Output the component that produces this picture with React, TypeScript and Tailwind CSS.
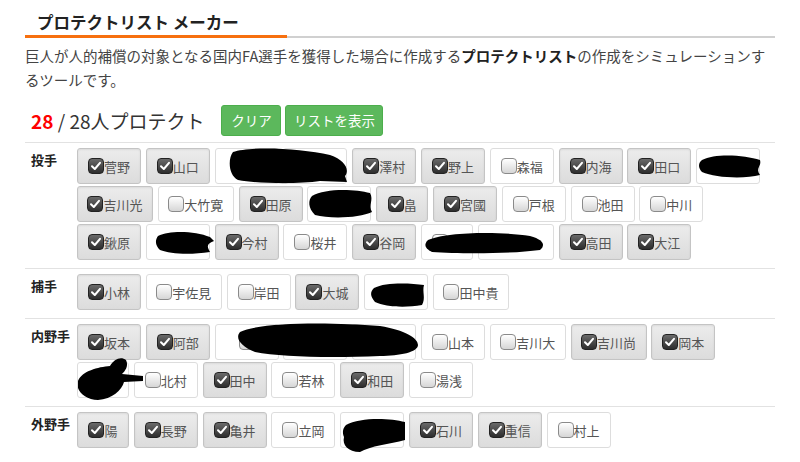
import React from "react";

type P = { n: string; c: boolean };

const W: Record<number, string> = { 1: "w-[52px]", 2: "w-[64px]", 3: "w-[76px]" };

function Check({ on }: { on: boolean }) {
  if (on)
    return (
      <span className="w-[16px] h-[16px] rounded-[4px] border border-[#222] bg-gradient-to-b from-[#6a6a6a] to-[#2e2e2e] flex items-center justify-center shrink-0">
        <svg width="12" height="12" viewBox="0 0 12 12">
          <path d="M2 6.2 L4.8 9 L10 2.8" fill="none" stroke="#fff" strokeWidth="2" strokeLinecap="round" strokeLinejoin="round" />
        </svg>
      </span>
    );
  return (
    <span className="w-[16px] h-[16px] rounded-[4px] border border-[#8a8a8a] bg-gradient-to-b from-white to-[#d6d6d6] shrink-0" />
  );
}

function Box({ p }: { p: P }) {
  const len = p.n.length || 2;
  return (
    <div
      className={
        "h-[36px] flex items-center justify-center rounded-[3px] border text-[13px] text-[#555] " +
        W[len] +
        (p.c
          ? " border-[#c4c4c4] bg-gradient-to-b from-[#ececec] to-[#dcdcdc] shadow-[inset_0_1px_2px_rgba(0,0,0,0.08)]"
          : " border-[#ddd] bg-white")
      }
    >
      <Check on={p.c} />
      <span className="leading-none">{p.n}</span>
    </div>
  );
}

const x = (n: string): P => ({ n, c: true });
const o = (n: string): P => ({ n, c: false });
const blank2: P = { n: "", c: false };
const blank1: P = { n: "\u3000", c: false };
const blank3: P = { n: "\u3000\u3000\u3000", c: false };

const rows: { label: string; items: P[] }[] = [
  {
    label: "投手",
    items: [
      x("菅野"), x("山口"), blank2, blank2, x("澤村"), x("野上"), o("森福"), x("内海"), x("田口"), blank2,
      x("吉川光"), o("大竹寛"), x("田原"), blank2, x("畠"), x("宮國"), o("戸根"), o("池田"), o("中川"),
      x("鍬原"), blank2, x("今村"), o("桜井"), x("谷岡"), blank1, blank3, x("高田"), x("大江"),
    ],
  },
  {
    label: "捕手",
    items: [x("小林"), o("宇佐見"), o("岸田"), x("大城"), blank2, o("田中貴")],
  },
  {
    label: "内野手",
    items: [
      x("坂本"), x("阿部"), blank2, blank2, blank2, o("山本"), o("吉川大"), x("吉川尚"), x("岡本"),
      blank1, o("北村"), x("田中"), o("若林"), x("和田"), o("湯浅"),
    ],
  },
  {
    label: "外野手",
    items: [x("陽"), x("長野"), x("亀井"), o("立岡"), blank2, x("石川"), x("重信"), o("村上")],
  },
];

export default function App() {
  return (
    <div
      className="relative w-[800px] h-[462px] overflow-hidden bg-white text-[#333]"
      style={{ fontFamily: '"Noto Sans CJK JP", "Noto Sans", sans-serif' }}
    >
      <div className="px-[25px]">
        <div className="pl-[12px] pt-[12px] pb-[3px] text-[16.5px] leading-[20px] font-bold text-[#222]">
          プロテクトリスト メーカー
        </div>
        <div className="flex items-end">
          <div className="w-[262px] h-[3px] bg-[#f7700f]" />
          <div className="flex-1 h-[2px] bg-[#d0d0d0]" />
        </div>
        <div className="mt-[6px] text-[14.5px] leading-[24px] text-[#444]">
          <div className="whitespace-nowrap">
            巨人が人的補償の対象となる国内FA選手を獲得した場合に作成する
            <b className="text-[#222]">プロテクトリスト</b>
            の作成をシミュレーションす
          </div>
          <div className="whitespace-nowrap">るツールです。</div>
        </div>
        <div className="mt-[13px] h-[31px] flex items-center pl-[6px]">
          <span className="text-[19px] leading-none text-[#333]">
            <b className="text-[#f00]">28</b> / 28人プロテクト
          </span>
          <div className="ml-[17px] flex gap-[4px]">
            <div className="w-[60px] h-[31px] rounded-[3px] bg-[#5cb85c] border border-[#4cae4c] text-white text-[13.5px] flex items-center justify-center">
              クリア
            </div>
            <div className="w-[98px] h-[31px] rounded-[3px] bg-[#5cb85c] border border-[#4cae4c] text-white text-[13.5px] flex items-center justify-center">
              リストを表示
            </div>
          </div>
        </div>
        <div className="mt-[6px] border-t border-[#e2e2e2]">
          {rows.map((r, i) => (
            <div key={r.label} className={"flex " + (i < rows.length - 1 ? "border-b border-[#e2e2e2]" : "")}>
              <div className="w-[52px] shrink-0 pl-[6px] pt-[8px] text-[13px] font-bold text-[#222] leading-[18px]">
                {r.label}
              </div>
              <div className="flex-1 flex flex-wrap gap-x-[4.8px] gap-y-[2px] pt-[5px] pb-[8px] pr-[10px]">
                {r.items.map((p, j) => (
                  <Box key={j} p={p} />
                ))}
              </div>
            </div>
          ))}
        </div>
      </div>
      <svg className="absolute left-0 top-0 pointer-events-none" width="800" height="462" viewBox="0 0 800 462">
        <g fill="#000">
          <path d="M233,152 C250,146 300,148 330,155 C345,160 350,170 345,176 L347,182 L320,181 C300,184 260,184 238,180 C228,175 228,158 233,152 Z" />
          <path d="M702,160 C715,153 745,155 760,160 C762,166 755,168 760,175 C745,179 715,178 702,172 C698,168 698,163 702,160 Z" />
          <path d="M312,196 C325,188 355,189 370,193 C374,200 368,205 372,212 C360,218 330,219 315,215 C308,208 308,200 312,196 Z" />
          <path d="M158,236 C170,230 195,231 210,237 L214,241 C205,244 208,248 210,252 C190,255 170,254 160,250 C155,245 155,240 158,236 Z" />
          <path d="M428,240 C445,232 500,231 530,236 C545,240 545,246 540,250 C510,254 460,254 432,252 C424,248 424,244 428,240 Z" />
          <path d="M374,288 C385,282 410,283 424,285 C422,292 426,298 422,305 C405,308 385,307 375,302 C370,296 370,292 374,288 Z" />
          <path d="M240,332 C260,322 330,322 380,326 C405,330 418,338 418,345 C418,352 400,356 380,356 C330,358 280,357 255,352 C240,346 235,338 240,332 Z" />
          <path d="M78,381 C82,371 98,367 110,366 C114,359 121,356 126,360 C129,366 125,371 122,374 L143,376 L143,381 L124,382 C122,390 112,399 98,400 C88,400 80,394 78,388 Z" />
          <path d="M346,425 C360,417 390,418 405,422 L405,440 C390,444 370,446 360,452 C348,452 342,445 344,437 C342,432 343,428 346,425 Z" />
        </g>
      </svg>
    </div>
  );
}
